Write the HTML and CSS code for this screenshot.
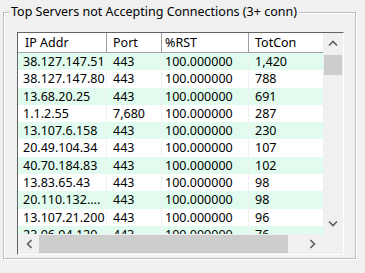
FILE: index.html
```html
<!DOCTYPE html>
<html>
<head>
<meta charset="utf-8">
<link rel="stylesheet" href="styles.css">
</head>
<body>
<div class="group">
  <div class="legend">Top Servers not Accepting Connections (3+ conn)</div>
  <div class="list">
    <div class="content">
      <div class="row head">
        <div class="c c1">IP Addr</div><div class="c c2">Port</div><div class="c c3">%RST</div><div class="c c4">TotCon</div>
      </div>
      <div class="rows">
        <div class="row alt"><div class="c c1">38.127.147.51</div><div class="c c2">443</div><div class="c c3">100.000000</div><div class="c c4">1,420</div></div>
        <div class="row"><div class="c c1">38.127.147.80</div><div class="c c2">443</div><div class="c c3">100.000000</div><div class="c c4">788</div></div>
        <div class="row alt"><div class="c c1">13.68.20.25</div><div class="c c2">443</div><div class="c c3">100.000000</div><div class="c c4">691</div></div>
        <div class="row"><div class="c c1">1.1.2.55</div><div class="c c2">7,680</div><div class="c c3">100.000000</div><div class="c c4">287</div></div>
        <div class="row alt"><div class="c c1">13.107.6.158</div><div class="c c2">443</div><div class="c c3">100.000000</div><div class="c c4">230</div></div>
        <div class="row"><div class="c c1">20.49.104.34</div><div class="c c2">443</div><div class="c c3">100.000000</div><div class="c c4">107</div></div>
        <div class="row alt"><div class="c c1">40.70.184.83</div><div class="c c2">443</div><div class="c c3">100.000000</div><div class="c c4">102</div></div>
        <div class="row"><div class="c c1">13.83.65.43</div><div class="c c2">443</div><div class="c c3">100.000000</div><div class="c c4">98</div></div>
        <div class="row alt"><div class="c c1">20.110.132....</div><div class="c c2">443</div><div class="c c3">100.000000</div><div class="c c4">98</div></div>
        <div class="row"><div class="c c1">13.107.21.200</div><div class="c c2">443</div><div class="c c3">100.000000</div><div class="c c4">96</div></div>
        <div class="row alt"><div class="c c1">23.96.94.120</div><div class="c c2">443</div><div class="c c3">100.000000</div><div class="c c4">76</div></div>
      </div>
    </div>
    <div class="vscroll">
      <div class="btn"><svg width="10" height="6" viewBox="0 0 10 6"><path d="M1 5.5 L5 1.5 L9 5.5" fill="none" stroke="#606060" stroke-width="1.6"/></svg></div>
      <div class="vtrack"><div class="vthumb"></div></div>
      <div class="btn"><svg width="10" height="6" viewBox="0 0 10 6"><path d="M1 0.5 L5 4.5 L9 0.5" fill="none" stroke="#606060" stroke-width="1.6"/></svg></div>
    </div>
    <div class="hscroll">
      <div class="btn"><svg width="6" height="10" viewBox="0 0 6 10"><path d="M5.5 1 L1.5 5 L5.5 9" fill="none" stroke="#606060" stroke-width="1.6"/></svg></div>
      <div class="htrack"><div class="hthumb"></div></div>
      <div class="btn"><svg width="6" height="10" viewBox="0 0 6 10"><path d="M0.5 1 L4.5 5 L0.5 9" fill="none" stroke="#606060" stroke-width="1.6"/></svg></div>
    </div>
    <div class="corner"></div>
  </div>
</div>
</body>
</html>
```
FILE: styles.css
```css
html, body {
  margin: 0;
  padding: 0;
  background: #f0f0f0;
  width: 365px;
  height: 273px;
  overflow: hidden;
  font-family: "Noto Sans", "Open Sans", sans-serif;
  font-size: 12.5px;
  color: #000;
}
.group {
  position: relative;
  box-sizing: border-box;
  margin: 12px 0 0 3px;
  width: 353px;
  height: 247px;
  border: 1px solid #bcbcbc;
  box-shadow: inset 1px 1px 0 #fff, 1px 1px 0 #fff;
  padding: 19px 0 0 13px;
}
.legend {
  position: absolute;
  top: -10px;
  left: 5px;
  padding: 0 2px;
  background: #f0f0f0;
  line-height: 18px;
  white-space: nowrap;
}
.list {
  box-sizing: border-box;
  width: 327px;
  height: 223px;
  border-top: 1px solid #646464;
  border-left: 1px solid #646464;
  border-right: 1px solid #fff;
  border-bottom: 1px solid #fff;
  background: #fff;
  display: grid;
  grid-template-columns: 305px 20px;
  grid-template-rows: 201px 20px;
}
.content {
  overflow: hidden;
  background: #fff;
}
.row {
  display: flex;
  height: 17.3px;
  line-height: 17px;
  white-space: nowrap;
}
.row.alt { background: #e1fcee; }
.c {
  box-sizing: border-box;
  overflow: hidden;
  padding-left: 6px;
  border-right: 1px solid #f0f0f0;
}
.c1 { width: 89px; padding-left: 5px; }
.c2 { width: 55px; }
.c3 { width: 87px; padding-left: 3px; }
.c4 { flex: 1; border-right: none; }
.head {
  height: 20px;
  line-height: 19px;
  box-sizing: border-box;
  border-bottom: 1px solid #a0a0a0;
  background: #fff;
}
.head .c { border-right: 1px solid #a0a0a0; }
.head .c1 { padding-left: 7px; }
.head .c4 { border-right: none; }
.vscroll {
  background: #f0f0f0;
  display: flex;
  flex-direction: column;
}
.vscroll .btn {
  height: 20px;
  display: flex;
  align-items: center;
  justify-content: center;
}
.vtrack { flex: 1; padding: 2px 1px 0 1px; }
.vthumb { height: 20px; background: #cdcdcd; }
.hscroll {
  background: #f0f0f0;
  display: flex;
}
.hscroll .btn {
  width: 21px;
  display: flex;
  align-items: center;
  justify-content: center;
}
.htrack { flex: 1; padding: 1px 0; }
.hthumb { width: 249px; height: 100%; background: #cdcdcd; }
.corner { background: #f0f0f0; }
```
